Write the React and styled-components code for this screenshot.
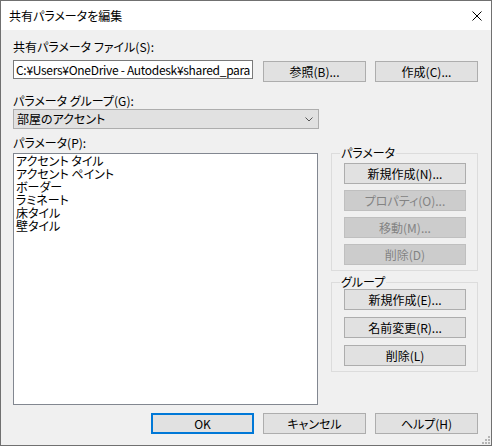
import React from "react";
import styled, { createGlobalStyle } from "styled-components";

const FONT = `"Noto Sans CJK JP", "Noto Sans", sans-serif`;

const parameters = [
  "アクセント タイル",
  "アクセント ペイント",
  "ボーダー",
  "ラミネート",
  "床タイル",
  "壁タイル"
];

export default function App() {
  return (
    <>
      <GlobalStyle />
      <Dialog>
        <TitleBar>
          <Title>共有パラメータを編集</Title>
          <CloseButton aria-label="close">
            <svg width="10" height="10" viewBox="0 0 10 10">
              <path d="M0.5 0.5 L9.5 9.5 M9.5 0.5 L0.5 9.5" stroke="#000" strokeWidth="1" fill="none" />
            </svg>
          </CloseButton>
        </TitleBar>
        <Body>
          <Label>共有パラメータ ファイル(S):</Label>
          <FileRow>
            <PathInput>
              <PathText>C:¥Users¥OneDrive - Autodesk¥shared_parameters.txt</PathText>
            </PathInput>
            <Button $top={1}>参照(B)...</Button>
            <Button $top={1}>作成(C)...</Button>
          </FileRow>
          <Label $top={12}>パラメータ グループ(G):</Label>
          <Combo>
            <span>部屋のアクセント</span>
            <svg width="8" height="5" viewBox="0 0 8 5">
              <polyline points="0.5,0.5 4,4 7.5,0.5" stroke="#555" strokeWidth="1" fill="none" />
            </svg>
          </Combo>
          <Main>
            <LeftColumn>
              <Label>パラメータ(P):</Label>
              <ListBox>
                {parameters.map(p => (
                  <ListItem key={p}>{p}</ListItem>
                ))}
              </ListBox>
            </LeftColumn>
            <RightColumn>
              <GroupBox $pad={3}>
                <Legend>パラメータ</Legend>
                <Button $wide>新規作成(N)...</Button>
                <Button $wide disabled>プロパティ(O)...</Button>
                <Button $wide disabled>移動(M)...</Button>
                <Button $wide disabled>削除(D)</Button>
              </GroupBox>
              <GroupBox $pad={0} $gap={7}>
                <Legend>グループ</Legend>
                <Button $wide>新規作成(E)...</Button>
                <Button $wide>名前変更(R)...</Button>
                <Button $wide>削除(L)</Button>
              </GroupBox>
            </RightColumn>
          </Main>
          <Footer>
            <Button $default>OK</Button>
            <Button>キャンセル</Button>
            <Button>ヘルプ(H)</Button>
          </Footer>
          <Grip viewBox="0 0 8 8" width="8" height="8">
            {[
              [6, 0],
              [3, 3],
              [6, 3],
              [0, 6],
              [3, 6],
              [6, 6]
            ].map(([x, y]) => (
              <rect key={`${x}-${y}`} x={x} y={y} width="2" height="2" fill="#b5b5b5" />
            ))}
          </Grip>
        </Body>
      </Dialog>
    </>
  );
}

const GlobalStyle = createGlobalStyle`
  html, body {
    margin: 0;
    padding: 0;
    background: #ffffff;
  }
  body {
    font-family: ${FONT};
    font-size: 12px;
    font-feature-settings: "palt";
  }
`;

const Dialog = styled.div`
  box-sizing: border-box;
  width: 492px;
  height: 446px;
  border: 1px solid #707070;
  display: flex;
  flex-direction: column;
  background: #f0f0f0;
  color: #000;
`;

const TitleBar = styled.div`
  height: 29px;
  flex: none;
  background: #ffffff;
  display: flex;
  align-items: center;
  justify-content: space-between;
  padding: 0 9px 0 8px;
`;

const Title = styled.div`
  font-size: 12px;
  line-height: 14px;
`;

const CloseButton = styled.div`
  display: flex;
  align-items: center;
  margin-top: 1px;
`;

const Body = styled.div`
  position: relative;
  flex: 1;
  display: flex;
  flex-direction: column;
  padding: 10px 13px 0 12px;
`;

const Label = styled.div`
  height: 14px;
  line-height: 14px;
  margin-top: ${({ $top = 0 }) => $top}px;
  white-space: nowrap;
`;

const FileRow = styled.div`
  display: flex;
  align-items: flex-start;
  gap: 10px;
  margin-top: 6px;
  height: 22px;

  & > button + button {
    margin-left: -1px;
  }
`;

const PathInput = styled.div`
  box-sizing: border-box;
  width: 240px;
  height: 19px;
  flex: none;
  background: #ffffff;
  border: 1px solid #7a7a7a;
  padding: 0 2px;
  line-height: 17px;
  overflow: hidden;
`;

const PathText = styled.div`
  width: 234px;
  overflow: hidden;
  white-space: nowrap;
  letter-spacing: -0.3px;
`;

const Button = styled.button`
  box-sizing: border-box;
  flex: none;
  width: ${({ $wide }) => ($wide ? "122px" : "103px")};
  height: 21px;
  margin: ${({ $top = 0 }) => $top}px 0 0;
  padding: 0;
  font-family: ${FONT};
  font-size: 12px;
  font-feature-settings: "palt";
  line-height: 17px;
  color: #000;
  background: #e1e1e1;
  border: ${({ $default }) => ($default ? "2px solid #0078d7" : "1px solid #adadad")};
  border-radius: 0;
  text-align: center;

  &:disabled {
    background: #cccccc;
    border-color: #bfbfbf;
    color: #838383;
  }
`;

const Combo = styled.div`
  box-sizing: border-box;
  margin-top: 1px;
  width: 306px;
  height: 20px;
  background: #e1e1e1;
  border: 1px solid #adadad;
  display: flex;
  align-items: center;
  justify-content: space-between;
  padding: 0 5px 0 3px;
  line-height: 18px;
`;

const Main = styled.div`
  display: flex;
  gap: 13px;
  margin-top: 7px;
`;

const LeftColumn = styled.div`
  display: flex;
  flex-direction: column;
  width: 306px;
`;

const ListBox = styled.div`
  box-sizing: border-box;
  margin-top: 3px;
  height: 252px;
  background: #ffffff;
  border: 1px solid #828790;
  padding: 0 2px;
`;

const ListItem = styled.div`
  height: 13px;
  line-height: 13px;
  white-space: nowrap;
`;

const RightColumn = styled.div`
  display: flex;
  flex-direction: column;
  gap: 4px;
  width: 147px;
  margin-top: 10px;
`;

const GroupBox = styled.fieldset`
  box-sizing: border-box;
  margin: 0;
  min-width: 0;
  border: 1px solid #dcdcdc;
  padding: ${({ $pad }) => $pad}px 12px 5px;
  display: flex;
  flex-direction: column;
  gap: ${({ $gap = 6 }) => $gap}px;
`;

const Legend = styled.legend`
  margin-left: -4px;
  padding: 0 1px;
  height: 14px;
  line-height: 14px;
`;

const Footer = styled.div`
  display: flex;
  justify-content: flex-end;
  gap: 9px;
  margin-top: 8px;
`;

const Grip = styled.svg`
  position: absolute;
  right: 1px;
  bottom: 1px;
`;
